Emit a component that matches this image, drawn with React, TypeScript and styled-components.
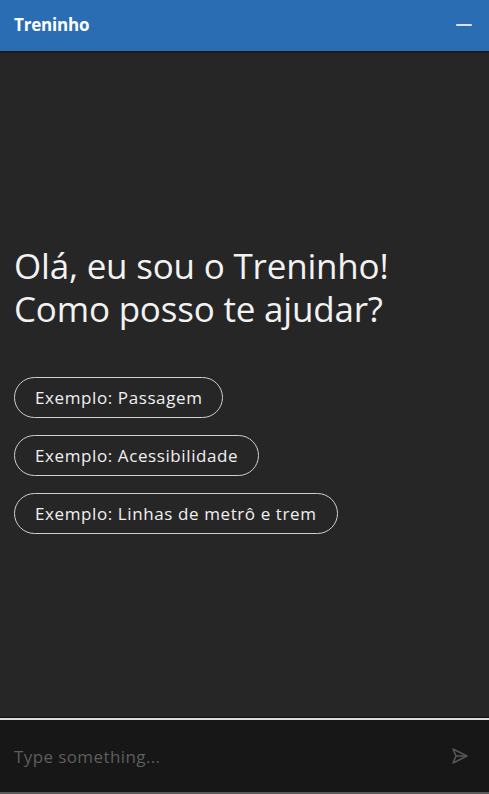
import React from "react";
import styled, { createGlobalStyle } from "styled-components";

const Global = createGlobalStyle`
  html, body { margin: 0; padding: 0; background: #262626; }
  * { box-sizing: border-box; }
`;

const Shell = styled.div`
  height: 794px;
  display: flex;
  flex-direction: column;
  background: #262626;
  font-family: "Open Sans", "Liberation Sans", sans-serif;
`;

const Header = styled.header`
  height: 53px;
  flex: none;
  display: flex;
  align-items: center;
  justify-content: space-between;
  padding: 0 16px 2px 14px;
  background: #2a6db2;
  border-bottom: 2px solid #1b1b1b;
`;

const Title = styled.h1`
  margin: 0;
  color: #ffffff;
  font-size: 17px;
  font-weight: 700;
  letter-spacing: -0.2px;
`;

const MinButton = styled.button`
  width: 18px;
  height: 18px;
  padding: 0;
  border: none;
  background: transparent;
  display: flex;
  align-items: center;
  justify-content: center;
  &::before {
    content: "";
    width: 16px;
    height: 2px;
    background: #d8e4f2;
    border-radius: 1px;
  }
`;

const Body = styled.main`
  flex: 1;
  display: flex;
  flex-direction: column;
  justify-content: center;
  padding: 12px 14px 5px 14px;
`;

const Greeting = styled.h2`
  margin: 0 0 47px 0;
  color: #f2f2f2;
  font-family: "Open Sans", sans-serif;
  font-size: 35px;
  font-weight: 400;
  line-height: 43px;
  letter-spacing: -0.2px;
`;

const Examples = styled.div`
  display: flex;
  flex-direction: column;
  align-items: flex-start;
  gap: 17px;
`;

const Chip = styled.button`
  height: 41px;
  padding: 0 20px;
  border: 1.5px solid #cfcfcf;
  border-radius: 21px;
  background: transparent;
  color: #f0f0f0;
  font-family: "Open Sans", sans-serif;
  font-size: 17px;
  font-weight: 500;
  letter-spacing: 0.6px;
  cursor: pointer;
`;

const Footer = styled.footer`
  height: 76px;
  flex: none;
  display: flex;
  align-items: center;
  justify-content: space-between;
  padding: 0 20px 0 14px;
  background: #171717;
  border-top: 2px solid #dcdcdc;
  box-shadow: 0 -1px 0 #111;
  border-bottom: 2px solid #5a5a5a;
`;

const Input = styled.input`
  flex: 1;
  padding: 0;
  border: none;
  outline: none;
  background: transparent;
  color: #ddd;
  font-family: "Open Sans", sans-serif;
  font-size: 17px;
  font-weight: 500;
  letter-spacing: 0.4px;
  &::placeholder { color: #5e5e5e; }
`;

const SendButton = styled.button`
  border: none;
  background: transparent;
  padding: 0;
  display: flex;
`;

export default function App() {
  return (
    <>
      <Global />
      <Shell>
        <Header>
          <Title>Treninho</Title>
          <MinButton aria-label="Minimizar" />
        </Header>
        <Body>
          <Greeting>
            Olá, eu sou o Treninho!
            <br />
            Como posso te ajudar?
          </Greeting>
          <Examples>
            <Chip>Exemplo: Passagem</Chip>
            <Chip>Exemplo: Acessibilidade</Chip>
            <Chip>Exemplo: Linhas de metrô e trem</Chip>
          </Examples>
        </Body>
        <Footer>
          <Input placeholder="Type something..." />
          <SendButton aria-label="Enviar">
            <svg width="18" height="18" viewBox="0 0 18 18" fill="none" stroke="#555" strokeWidth="1.6" strokeLinejoin="round">
              <path d="M2 2 L16 9 L2 16 L5 9 Z" />
              <path d="M5 9 H16" />
            </svg>
          </SendButton>
        </Footer>
      </Shell>
    </>
  );
}
